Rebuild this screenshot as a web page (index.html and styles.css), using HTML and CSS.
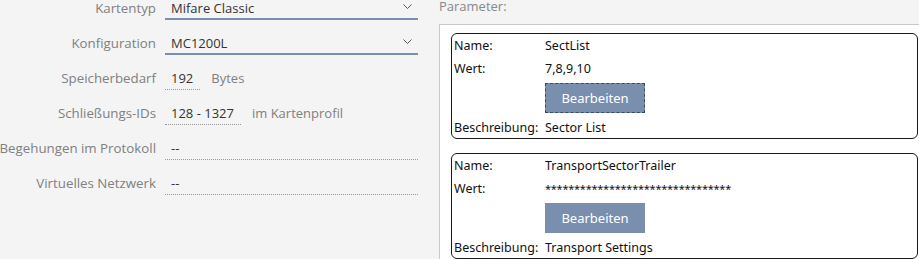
FILE: index.html
```html
<!DOCTYPE html>
<html lang="de">
<head>
    <meta charset="UTF-8">
    <title>Kartenkonfiguration</title>
    <link rel="stylesheet" href="styles.css">
</head>
<body>
    <div class="page">
        <div class="form">
            <div class="row">
                <div class="label">Kartentyp</div>
                <div class="field select">
                    <span>Mifare Classic</span>
                    <svg class="chevron" width="9" height="5" viewBox="0 0 9 5"><path d="M0.5 0.5 L4.5 4.5 L8.5 0.5" fill="none" stroke="#555" stroke-width="1"/></svg>
                </div>
            </div>
            <div class="row">
                <div class="label">Konfiguration</div>
                <div class="field select">
                    <span>MC1200L</span>
                    <svg class="chevron" width="9" height="5" viewBox="0 0 9 5"><path d="M0.5 0.5 L4.5 4.5 L8.5 0.5" fill="none" stroke="#555" stroke-width="1"/></svg>
                </div>
            </div>
            <div class="row">
                <div class="label">Speicherbedarf</div>
                <div class="field inline">
                    <span class="value">192</span>
                    <span class="unit">Bytes</span>
                </div>
            </div>
            <div class="row">
                <div class="label">Schließungs-IDs</div>
                <div class="field inline">
                    <span class="value">128 - 1327</span>
                    <span class="unit">im Kartenprofil</span>
                </div>
            </div>
            <div class="row">
                <div class="label">Begehungen im Protokoll</div>
                <div class="field readonly">--</div>
            </div>
            <div class="row">
                <div class="label">Virtuelles Netzwerk</div>
                <div class="field readonly">--</div>
            </div>
        </div>

        <div class="params">
            <div class="params-title">Parameter:</div>
            <div class="params-box">
                <div class="param">
                    <div class="key">Name:</div><div class="val">SectList</div>
                    <div class="key">Wert:</div><div class="val">7,8,9,10</div>
                    <div></div><div><button class="edit focused">Bearbeiten</button></div>
                    <div class="key desc">Beschreibung:</div><div class="val desc">Sector List</div>
                </div>
                <div class="param">
                    <div class="key">Name:</div><div class="val">TransportSectorTrailer</div>
                    <div class="key">Wert:</div><div class="val stars">********************************</div>
                    <div></div><div><button class="edit">Bearbeiten</button></div>
                    <div class="key desc">Beschreibung:</div><div class="val desc">Transport Settings</div>
                </div>
            </div>
        </div>
    </div>
</body>
</html>
```

FILE: styles.css
```css
body {
    margin: 0;
    background: #f4f4f4;
    font-family: 'Open Sans', 'Noto Sans', sans-serif;
    overflow: hidden;
}
.page {
    display: flex;
    height: 259px;
}
.form {
    width: 418px;
    display: flex;
    flex-direction: column;
    flex-shrink: 0;
}
.row {
    display: flex;
    align-items: flex-start;
    gap: 9px;
    height: 35px;
}
.label {
    width: 156px;
    flex-shrink: 0;
    display: flex;
    justify-content: flex-end;
    white-space: nowrap;
    color: #808080;
    font-size: 13.3px;
    line-height: 16px;
}
.field {
    flex: 1;
    font-size: 13px;
    color: #333;
    line-height: 16px;
}
.select {
    display: flex;
    justify-content: space-between;
    align-items: center;
    border-bottom: 2px solid #7a8fae;
    padding: 0 0 2px 6px;
}
.select .chevron {
    margin-right: 6px;
    margin-bottom: 3px;
}
.inline {
    display: flex;
    gap: 11px;
}
.inline .value {
    border-bottom: 1px dotted #999;
    padding: 0 7px 3px 6px;
}
.inline .unit {
    color: #808080;
}
.readonly {
    border-bottom: 1px dotted #999;
    padding: 0 0 3px 6px;
}
.params {
    flex: 1;
    margin-left: 21px;
    display: flex;
    flex-direction: column;
}
.params-title {
    font-size: 13px;
    color: #888;
    line-height: 13px;
    height: 24px;
}
.params-box {
    flex: 1;
    background: #fff;
    border: 1px solid #c8c8c8;
    border-right: none;
    border-bottom: none;
    padding: 8px 0 0 11px;
    display: flex;
    flex-direction: column;
    gap: 14px;
}
.param {
    border: 1px solid #1a1a1a;
    border-radius: 6px;
    display: grid;
    grid-template-columns: 91px 1fr;
    padding: 0 0 0 2px;
    font-family: 'Noto Sans', sans-serif;
    font-size: 12.5px;
    color: #111;
    line-height: 23px;
    margin-right: 1px;
}
.param .desc {
    line-height: 20px;
}
.param .stars {
    font-size: 11px;
    letter-spacing: -0.25px;
}
.edit {
    display: block;
    margin: 3px 0 5px 0;
    width: 100px;
    height: 30px;
    background: #7a8fae;
    color: #fff;
    border: 1px solid #7a8fae;
    font-family: 'Noto Sans', sans-serif;
    font-size: 13px;
    padding: 0;
}
.edit.focused {
    border: 1px dashed #3b4a63;
}
```
